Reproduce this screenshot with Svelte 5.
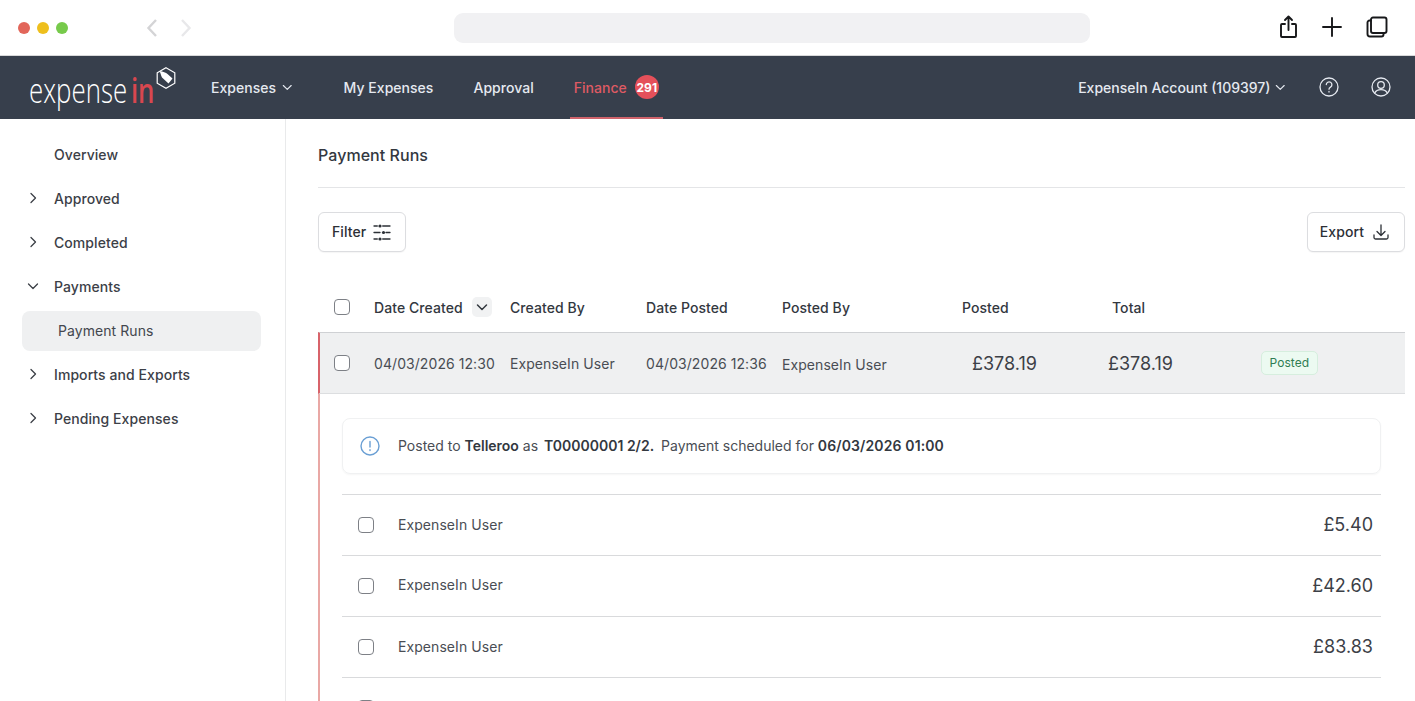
<script>
  const side = [
    { label: 'Overview', icon: '' },
    { label: 'Approved', icon: 'r' },
    { label: 'Completed', icon: 'r' },
    { label: 'Payments', icon: 'd' }
  ];
  const side2 = [
    { label: 'Imports and Exports', icon: 'r' },
    { label: 'Pending Expenses', icon: 'r' }
  ];
  const lines = ['£5.40', '£42.60', '£83.83'];
</script>

{#snippet chev(dir)}
  <svg class="chev" viewBox="0 0 12 12" width="12" height="12" aria-hidden="true">
    {#if dir === 'r'}
      <path d="M4 1.500 8.500 6 4 10.500" />
    {:else}
      <path d="M1.500 4 6 8.500 10.500 4" />
    {/if}
  </svg>
{/snippet}

<div class="app">
  <div class="chrome">
    <div class="dots"><i class="d1"></i><i class="d2"></i><i class="d3"></i></div>
    <div class="arrows">
      <svg width="14" height="20" viewBox="0 0 14 20"><path d="M11 2 3.500 10 11 18" /></svg>
      <svg class="fwd" width="14" height="20" viewBox="0 0 14 20"><path d="M3 2 10.500 10 3 18" /></svg>
    </div>
    <div class="url"></div>
    <div class="tools">
      <svg width="20" height="24" viewBox="0 0 20 24"><path d="M6 9H3a1 1 0 0 0-1 1v11a1 1 0 0 0 1 1h13a1 1 0 0 0 1-1V10a1 1 0 0 0-1-1h-3M9.500 15V2M6 5l3.500-3.500L13 5" /></svg>
      <svg width="20" height="20" viewBox="0 0 20 20"><path d="M10 1v18M1 10h18" /></svg>
      <svg width="22" height="22" viewBox="0 0 22 22"><rect x="5" y="1.500" width="15.500" height="15.500" rx="2" /><path d="M5 4.500H3.500a2 2 0 0 0-2 2V18a2.500 2.500 0 0 0 2.500 2.500h11.500a2 2 0 0 0 2-2V17" /></svg>
    </div>
  </div>

  <header class="nav">
    <div class="logo">
      <span class="lg"><span class="lg-w">expense</span><span class="lg-r">in</span></span>
      <svg class="hex" width="20" height="22" viewBox="0 0 20 22"><path class="hx" d="M10 .8 18.800 5.800v10.400L10 21.200 1.200 16.200V5.800z" /><path class="tg" d="M3.500 4C7 4.500 10 5.500 11.500 7l5 4.500-4 5-6.500-6C5 8.500 4.500 6 3.500 4z" /></svg>
    </div>
    <div class="nv first">Expenses {@render chev('d')}</div>
    <div class="nv mine">My Expenses</div>
    <div class="nv appr">Approval</div>
    <div class="nv fin">Finance <span class="badge">291</span></div>
    <div class="right">
      <div class="nv acct">ExpenseIn Account (109397) {@render chev('d')}</div>
      <svg class="ri q" width="20" height="20" viewBox="0 0 20 20"><circle cx="10" cy="10" r="9" /><path d="M7.300 7.600a2.800 2.800 0 1 1 4.200 2.500c-.9.500-1.500 1.100-1.500 2.100" /><path d="M10 14.500v.5" /></svg>
      <svg class="ri" width="20" height="20" viewBox="0 0 20 20"><circle cx="10" cy="10" r="9" /><circle cx="10" cy="8" r="3.300" /><path d="M3.800 16c1-2.300 3.300-3.300 6.200-3.300s5.200 1 6.200 3.300" /></svg>
    </div>
  </header>

  <div class="body">
    <aside class="side">
      {#each side as s}
        <div class="si">
          <span class="si-ic">{#if s.icon}{@render chev(s.icon)}{/if}</span>{s.label}
        </div>
      {/each}
      <div class="sub">Payment Runs</div>
      {#each side2 as s}
        <div class="si">
          <span class="si-ic">{@render chev(s.icon)}</span>{s.label}
        </div>
      {/each}
    </aside>

    <main class="main">
      <h1>Payment Runs</h1>
      <div class="toolbar">
        <button>Filter
          <svg width="18" height="18" viewBox="0 0 18 18"><path d="M1 3h3.300M9.700 3H17M1 9.500h6M13 9.500h4M1 16h3.300M9.700 16H17" /><circle class="fl" cx="7" cy="3" r="1.600" /><circle class="fl" cx="10.500" cy="9.500" r="1.600" /><circle class="fl" cx="7" cy="16" r="1.600" /></svg>
        </button>
        <button class="exp">Export
          <svg width="18" height="18" viewBox="0 0 18 18"><path d="M9 2v10M5 8.500 9 12.500l4-4M2 12v2.500a1.500 1.500 0 0 0 1.500 1.500h11a1.500 1.500 0 0 0 1.500-1.500V12" /></svg>
        </button>
      </div>

      <div class="thead">
        <span class="cb"></span>
        <span class="hdate">Date Created <span class="sort">{@render chev('d')}</span></span>
        <span>Created By</span>
        <span>Date Posted</span>
        <span>Posted By</span>
        <span>Posted</span>
        <span>Total</span>
      </div>

      <div class="run">
        <span class="cb"></span>
        <span>04/03/2026 12:30</span>
        <span>ExpenseIn User</span>
        <span>04/03/2026 12:36</span>
        <span class="pb">ExpenseIn User</span>
        <span class="amt">£378.19</span>
        <span class="amt">£378.19</span>
        <span><span class="tag">Posted</span></span>
      </div>

      <div class="detail">
        <div class="info">
          <svg width="20" height="20" viewBox="0 0 20 20"><circle cx="10" cy="10" r="9" /><path d="M10 5.500v5.500M10 13.800v.7" /></svg>
          <p>Posted to <b>Telleroo</b> as <b class="ref">T00000001 2/2.</b> Payment scheduled for <b class="when">06/03/2026 01:00</b></p>
        </div>
        <div class="lines">
          {#each lines as l}
            <div class="line">
              <span class="cb"></span>
              <span class="who">ExpenseIn User</span>
              <span class="amt">{l}</span>
            </div>
          {/each}
          <div class="line"><span class="cb"></span></div>
        </div>
      </div>
    </main>
  </div>
</div>

<style>
  :global(body) { margin: 0; background: #fff; overflow: hidden; }
  .app { height: 701px; overflow: hidden; font-family: Inter, "Liberation Sans", sans-serif; color: #33383f; font-size: 14px; letter-spacing: .07px; }
  .chrome { height: 56px; box-sizing: border-box; display: flex; align-items: center; position: relative; border-bottom: 1px solid #d9d9da; }
  .dots { display: flex; gap: 7px; margin-left: 18px; margin-top: 1px; }
  .dots i { width: 12px; height: 12px; border-radius: 50%; display: block; }
  .d1 { background: #e2665a; } .d2 { background: #eebf1d; } .d3 { background: #77ca4b; }
  .arrows { display: flex; gap: 20px; margin-left: 77px; }
  .arrows svg { fill: none; stroke: #d4d4d6; stroke-width: 2.400; }
  .arrows .fwd { stroke: #e8e8ea; }
  .url { width: 636px; height: 30px; margin-left: 261px; background: #f1f1f3; border-radius: 9px; }
  .tools { display: flex; align-items: center; gap: 23px; margin-left: 189px; margin-top: -1px; }
  .tools svg { fill: none; stroke: #17181a; stroke-width: 1.900; stroke-linecap: round; stroke-linejoin: round; }
  .tools svg:last-child { margin-left: 1px; }

  .nav { height: 63px; background: #373f4c; display: flex; align-items: center; color: #e5e9f0; font-weight: 500; letter-spacing: .03px; }
  .logo { width: 211px; height: 100%; flex: none; box-sizing: border-box; padding-left: 29px; position: relative; }
  .lg { display: inline-block; font-family: "Open Sans", sans-serif; font-size: 34px; font-weight: 300; letter-spacing: 0; line-height: 63px; transform: scaleX(.76); transform-origin: left center; white-space: nowrap; margin-top: 3px; }
  .lg-w { color: #fff; }
  .lg-r { color: #d9474f; font-weight: 600; margin-left: 5px; }
  .hex { position: absolute; left: 156px; top: 11px; }
  .hx { fill: none; stroke: #fff; stroke-width: 1.200; }
  .tg { fill: #fff; }
  .nv { display: flex; align-items: center; gap: 6px; height: 100%; }
  .chev { fill: none; stroke: currentColor; stroke-width: 1.300; stroke-linecap: round; stroke-linejoin: round; }
  .nv .chev { width: 10.500px; height: 10.500px; }
  .first { margin-top: -1px; }
  .mine { margin-left: 51px; }
  .appr { margin-left: 40px; }
  .fin { margin-left: 36px; padding: 0 4px; gap: 8px; color: #de5a63; align-self: stretch; box-sizing: border-box; border-bottom: 2px solid #d0636b; padding-top: 1px; }
  .badge { width: 24px; height: 24px; border-radius: 50%; background: #e5505a; color: #fff; font-size: 12px; font-weight: 700; display: flex; align-items: center; justify-content: center; }
  .right { margin-left: auto; display: flex; align-items: center; height: 100%; padding-right: 24px; }
  .acct { letter-spacing: 0; gap: 4px; }
  .acct .chev { margin-right: 1px; }
  .ri { fill: none; stroke: #e5e9f0; stroke-width: 1.300; stroke-linecap: round; margin-left: 32px; margin-top: -2px; }
  .ri.q { margin-left: 33px; }

  .body { display: flex; height: 582px; }
  .side { width: 286px; box-sizing: border-box; flex: none; border-right: 1px solid #e9eaeb; padding: 14px 24px 0 22px; }
  .si { height: 44px; box-sizing: border-box; padding-bottom: 2px; display: flex; align-items: center; font-weight: 500; color: #3c4047; }
  .si-ic { width: 32px; display: flex; align-items: center; padding-left: 5px; box-sizing: border-box; }
  .sub { height: 40px; box-sizing: border-box; padding-bottom: 2px; margin: 2px 0 2px; background: #eff0f1; border-radius: 8px; display: flex; align-items: center; padding-left: 36px; color: #43474e; }

  .main { flex: 1; min-width: 0; padding: 0 10px 0 32px; }
  h1 { margin: 0; height: 69px; box-sizing: border-box; padding-top: 26px; line-height: 20px; font-size: 16px; font-weight: 500; letter-spacing: .05px; border-bottom: 1px solid #e4e5e7; color: #33383f; }
  .toolbar { display: flex; justify-content: space-between; margin-top: 24px; }
  button { height: 40px; box-sizing: border-box; display: flex; align-items: center; gap: 7px; padding: 0 14px 2px 13px; background: #fff; border: 1px solid #dcdde0; border-radius: 6px; font: 500 14px Inter, sans-serif; letter-spacing: .07px; color: #2c3036; box-shadow: 0 1px 1px #0000000a; }
  button.exp { gap: 8px; padding-left: 12px; }
  button svg { fill: none; stroke: #2c3036; stroke-width: 1.300; stroke-linecap: round; stroke-linejoin: round; margin-top: 2px; }
  button .fl { fill: #2c3036; stroke: none; }

  .thead, .run { display: grid; align-items: center; padding-left: 16px; }
  .thead { grid-template-columns: 40px 136px 136px 136px 180px 150px 1fr; height: 49px; margin-top: 31px; font-weight: 500; color: #33383f; box-sizing: border-box; padding-bottom: 1px; }
  .hdate { display: flex; align-items: center; gap: 9px; }
  .sort { width: 20px; height: 20px; border-radius: 5px; background: #f1f2f3; display: flex; align-items: center; justify-content: center; }
  .sort .chev { stroke-width: 1.500; }
  .cb { width: 14px; height: 14px; border: 1px solid #7d8086; border-radius: 4px; background: #fff; display: block; }
  .run { grid-template-columns: 40px 136px 136px 136px 190px 136px 153px 1fr; height: 62px; box-sizing: border-box; background: #eff0f1; border-top: 1px solid #cfd1d4; border-bottom: 1px solid #dcdee0; border-left: 2px solid #d8636a; padding-left: 14px; color: #494d54; }
  .pb { margin-top: 2px; }
  .amt { font-size: 18px; color: #3c4047; letter-spacing: 0; }
  .tag { display: inline-block; font-size: 12px; line-height: 14px; padding: 4px 7.500px; color: #2f7d53; background: #ecfaf1; border: 1px solid #d6eede; border-radius: 5px; }

  .detail { border-left: 2px solid #e9a8a5; padding: 24px 24px 0 22px; }
  .info { height: 56px; box-sizing: border-box; display: flex; align-items: center; gap: 18px; padding-left: 17px; border: 1px solid #f0f1f2; border-radius: 8px; box-shadow: 0 1px 2px #0000000a; color: #494d54; letter-spacing: 0; }
  .info svg { fill: none; stroke: #6a9fd4; stroke-width: 1.400; stroke-linecap: round; }
  .info p { margin: 0 0 2px; }
  .info b { font-weight: 600; color: #33383f; }
  .ref { margin: 0 3px 0 2px; }
  .when { letter-spacing: .12px; }
  .lines { margin-top: 20px; }
  .line { height: 61px; box-sizing: border-box; display: flex; align-items: center; border-top: 1px solid #d9dadc; padding: 0 8px 0 16px; color: #494d54; }
  .who { margin: 0 0 2px 24px; }
  .line:nth-child(2) .who { margin-bottom: 4px; }
  .line .amt { margin-left: auto; margin-bottom: 1px; }
</style>
